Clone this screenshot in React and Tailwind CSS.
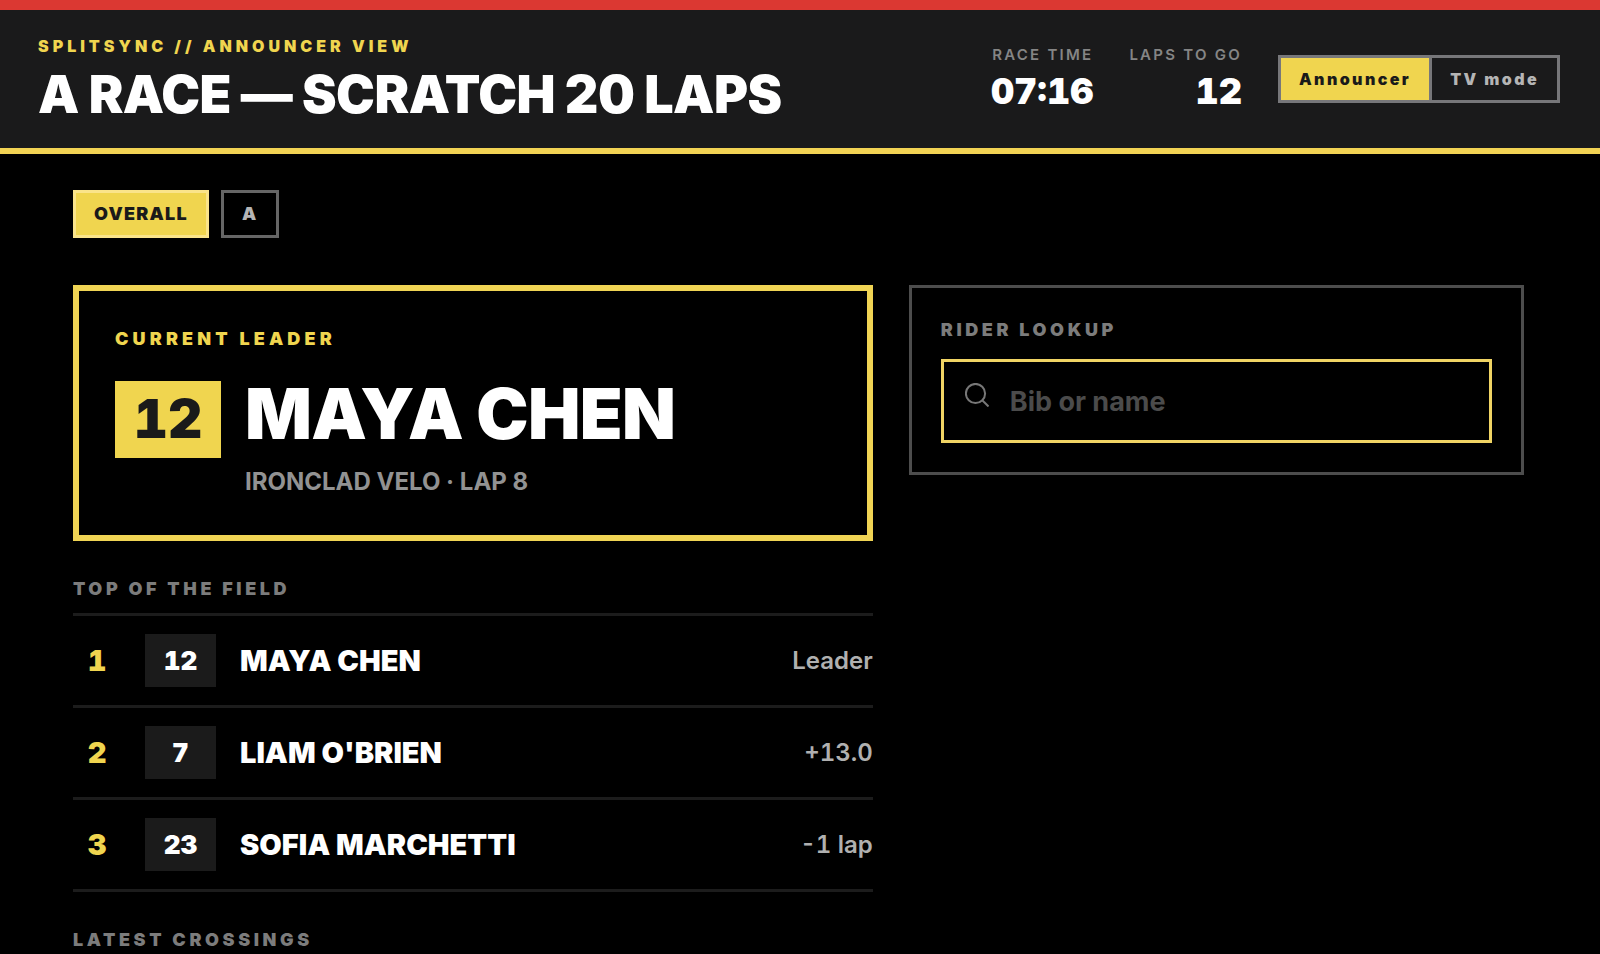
import { useState } from "react";

const riders = [
  { rank: 1, bib: "12", name: "MAYA CHEN", gap: "Leader" },
  { rank: 2, bib: "7", name: "LIAM O'BRIEN", gap: "+13.0" },
  { rank: 3, bib: "23", name: "SOFIA MARCHETTI", gap: "-1 lap" },
];

const digits = "font-black tabular-nums";

function Stat({ label, value }) {
  return (
    <div className="flex flex-col items-end">
      <span className="text-[15px] leading-5 font-semibold tracking-[0.15em] text-[#858585]">{label}</span>
      <span className={`${digits} mt-1 text-[36px] leading-11 text-white`}>{value}</span>
    </div>
  );
}

function SectionTitle({ children }) {
  return <h2 className="text-[18px] leading-6 font-black tracking-[0.2em] text-[#7c7c7c]">{children}</h2>;
}

function ModeSwitch() {
  const [mode, setMode] = useState("Announcer");
  return (
    <div className="flex border-3 border-[#77777a]">
      {["Announcer", "TV mode"].map((name, i) => (
        <button
          key={name}
          type="button"
          aria-pressed={mode === name}
          onClick={() => setMode(name)}
          className={`h-[42px] px-[18px] text-[16px] font-black tracking-[0.15em] ${i > 0 ? "border-l-3 border-[#77777a]" : ""} ${mode === name ? "bg-[#f0d54f] text-[#1a1a1a]" : "text-[#b5b5b5]"}`}
        >
          {name}
        </button>
      ))}
    </div>
  );
}

function CategoryTabs() {
  const [active, setActive] = useState("OVERALL");
  return (
    <div className="flex gap-3">
      {["OVERALL", "A"].map((name) => (
        <button
          key={name}
          type="button"
          aria-pressed={active === name}
          onClick={() => setActive(name)}
          className={`h-12 border-3 px-[18px] pb-px text-[18px] font-black tracking-[0.07em] ${active === name ? "border-[#fae48a] bg-[#f0d54f] text-[#1a1a1a]" : "border-[#666] text-[#b5b5b5]"}`}
        >
          {name}
        </button>
      ))}
    </div>
  );
}

export default function App() {
  return (
    <div className="min-h-screen bg-black font-['Inter',sans-serif] text-white">
      <header className="flex items-center justify-between border-t-10 border-b-6 border-t-[#db3832] border-b-[#f2d354] bg-[#1a1a1b] pt-6 pr-10 pb-6 pl-[38px]">
        <div>
          <p className="text-[16px] leading-6 font-black tracking-[0.25em] text-[#f0d54f]">SPLITSYNC // ANNOUNCER VIEW</p>
          <h1 className="mt-2 text-[52px] leading-[58px] font-black tracking-[-0.01em]">A RACE — SCRATCH 20 LAPS</h1>
        </div>
        <div className="flex items-center gap-9">
          <Stat label="RACE TIME" value="07:16" />
          <Stat label="LAPS TO GO" value="12" />
          <ModeSwitch />
        </div>
      </header>

      <main className="pt-9 pr-[76px] pl-[73px]">
        <CategoryTabs />
        <div className="mt-[47px] grid grid-cols-[1.3fr_1fr] items-start gap-9">
          <div>
            <section className="border-6 border-[#f0d454] px-9 py-9">
              <h2 className="text-[18px] leading-6 font-black tracking-[0.23em] text-[#f0d54f]">CURRENT LEADER</h2>
              <div className="mt-[30px] flex items-start gap-6">
                <span className={`${digits} w-[106px] bg-[#f0d54f] py-2 text-center text-[53px] leading-[61px] text-[#1a1a1a]`}>12</span>
                <div>
                  <p className="text-[70px] leading-[66px] font-black tracking-[-0.01em]">MAYA CHEN</p>
                  <p className="mt-[18px] text-[24px] leading-[34px] font-bold text-[#929292]">IRONCLAD VELO · LAP 8</p>
                </div>
              </div>
            </section>

            <section className="mt-9">
              <SectionTitle>TOP OF THE FIELD</SectionTitle>
              <ol className="mt-3 border-t-3 border-[#1c1c1c]">
                {riders.map((r) => (
                  <li key={r.rank} className="flex items-center border-b-3 border-[#1c1c1c] py-[18px]">
                    <span className={`${digits} w-12 text-center text-[29px] leading-9 text-[#f0d54f]`}>{r.rank}</span>
                    <span className={`${digits} ml-6 w-[71px] bg-[#1b1b1b] text-center text-[26px] leading-[53px]`}>{r.bib}</span>
                    <span className="ml-6 flex-1 text-[29px] leading-9 font-black">{r.name}</span>
                    <span className="text-[24px] leading-8 font-semibold text-[#b0b0b0] tabular-nums">{r.gap}</span>
                  </li>
                ))}
              </ol>
            </section>

            <section className="mt-9">
              <SectionTitle>LATEST CROSSINGS</SectionTitle>
            </section>
          </div>

          <section className="border-3 border-[#4d4d4d] px-[29px] pt-[30px] pb-[29px]">
            <label htmlFor="lookup" className="block text-[18px] leading-6 font-black tracking-[0.2em] text-[#7c7c7c]">
              RIDER LOOKUP
            </label>
            <div className="mt-[17px] flex items-start border-3 border-[#f0d464] px-[21px]">
              <svg viewBox="0 0 24 24" className="mt-[21px] size-6 shrink-0" fill="none" stroke="#777" strokeWidth="2" aria-hidden="true">
                <circle cx="10.5" cy="10.5" r="9.6" />
                <path d="M17.5 17.5L23.5 23.5" />
              </svg>
              <input
                id="lookup"
                type="text"
                placeholder="Bib or name"
                className="ml-[21px] h-[78px] min-w-0 flex-1 bg-transparent text-[27px] font-bold text-white outline-none placeholder:text-[#4b4b4b]"
              />
            </div>
          </section>
        </div>
      </main>
    </div>
  );
}
